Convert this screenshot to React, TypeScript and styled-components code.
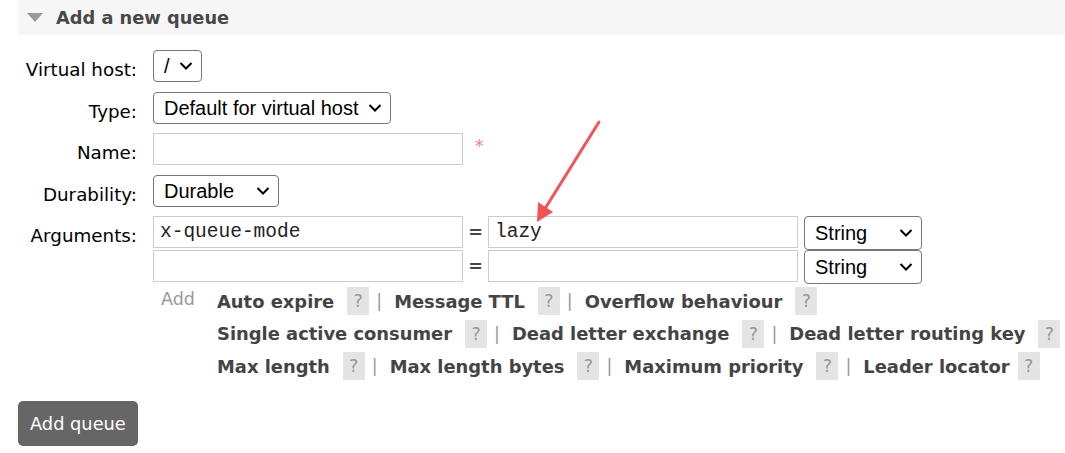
import React from "react";
import styled, { createGlobalStyle } from "styled-components";

const GlobalStyle = createGlobalStyle`
  body {
    margin: 0;
    background: #fff;
    font-family: "DejaVu Sans", Verdana, sans-serif;
    font-size: 17.5px;
    color: #000;
  }
`;

const Page = styled.div`
  position: relative;
  width: 1065px;
  height: 453px;
  padding-left: 18px;
  box-sizing: border-box;
  overflow: hidden;
`;

const SectionHeader = styled.h2`
  margin: 0;
  height: 35px;
  background: #f6f6f6;
  display: flex;
  align-items: center;
  gap: 13px;
  padding-left: 9px;
  font-size: 17.8px;
  font-weight: bold;
  color: #484848;
`;

const Triangle = styled.span`
  width: 0;
  height: 0;
  border-left: 8px solid transparent;
  border-right: 8px solid transparent;
  border-top: 9px solid #9a9a9a;
`;

const Form = styled.div`
  display: grid;
  grid-template-columns: 119px auto;
  column-gap: 16px;
  row-gap: 9.5px;
  margin-top: 15px;
`;

const Label = styled.label`
  text-align: right;
  padding-top: 10px;
  line-height: 20px;
  font-size: 18.3px;
  color: #000;
`;

const Field = styled.div`
  display: flex;
  align-items: center;
  gap: 12px;
`;

const SelectWrap = styled.div<{ $width: number }>`
  position: relative;
  width: ${(p) => p.$width}px;
  height: 32px;
  box-sizing: border-box;
  border: 1px solid #767676;
  border-radius: 4px;
  background: #fff;
  display: flex;
  align-items: center;
`;

const Select = styled.select`
  appearance: none;
  border: none;
  background: transparent;
  width: 100%;
  height: 100%;
  padding: 0 0 0 10px;
  font-family: "Liberation Sans", Arial, sans-serif;
  font-size: 20px;
  color: #000;
  outline: none;
`;

const Chevron = styled.svg`
  position: absolute;
  right: 8px;
  top: 50%;
  transform: translateY(-50%);
  pointer-events: none;
`;

const TextInput = styled.input<{ $mono?: boolean }>`
  width: 310px;
  height: 32px;
  box-sizing: border-box;
  border: 1px solid #ccc;
  padding: 0 6px;
  font-family: ${(p) =>
    p.$mono ? '"Liberation Mono", "Courier New", monospace' : '"DejaVu Sans", sans-serif'};
  font-size: 19.5px;
  color: #222;
  outline: none;
`;

const Required = styled.span`
  color: #f08080;
  font-size: 17px;
  margin-top: -6px;
`;

const ArgRow = styled.div`
  display: flex;
  align-items: flex-start;
  height: 34px;
`;

const Equals = styled.span`
  width: 25px;
  line-height: 32px;
  text-align: center;
  font-weight: bold;
  color: #444;
`;

const TypeSelect = styled(SelectWrap)`
  margin-left: 6px;
  height: 34px;
`;

const Extras = styled.div`
  display: flex;
  margin-top: 3px;
`;

const AddLink = styled.span`
  color: #999;
  width: 64px;
  padding-left: 8px;
  box-sizing: border-box;
  line-height: 24px;
`;

const HelpRows = styled.div`
  display: flex;
  flex-direction: column;
  gap: 4px;
`;

const HelpRow = styled.div`
  display: flex;
  align-items: center;
  height: 28.5px;
`;

const HelpName = styled.span`
  font-weight: bold;
  font-size: 17.9px;
  color: #444;
`;

const HelpMark = styled.span<{ $tight?: boolean }>`
  display: inline-flex;
  align-items: center;
  justify-content: center;
  width: 22px;
  height: 28px;
  margin-left: ${(p) => (p.$tight ? 8 : 13)}px;
  background: #e4e4e4;
  color: #999;
`;

const Pipe = styled.span`
  color: #999;
  margin: 0 12px 0 7px;
`;

const AddButton = styled.button`
  margin-top: 20px;
  height: 45px;
  padding: 0 12px;
  border: none;
  border-radius: 5px;
  background: #666;
  color: #fff;
  font-family: "DejaVu Sans", Verdana, sans-serif;
  font-size: 17.8px;
`;

const Annotation = styled.svg`
  position: absolute;
  left: 0;
  top: 0;
  pointer-events: none;
`;

const ChevronIcon = () => (
  <Chevron width="14" height="9" viewBox="0 0 14 9">
    <path d="M1.5 1.5 L7 7 L12.5 1.5" fill="none" stroke="#000" strokeWidth="2" />
  </Chevron>
);

type DropdownProps = { width: number; options: string[] };

const Dropdown = ({ width, options }: DropdownProps): JSX.Element => (
  <SelectWrap $width={width}>
    <Select defaultValue={options[0]}>
      {options.map((o) => (
        <option key={o}>{o}</option>
      ))}
    </Select>
    <ChevronIcon />
  </SelectWrap>
);

const helpRows: string[][] = [
  ["Auto expire", "Message TTL", "Overflow behaviour"],
  ["Single active consumer", "Dead letter exchange", "Dead letter routing key"],
  ["Max length", "Max length bytes", "Maximum priority", "Leader locator"],
];

const ArgumentRow = ({ name, value }: { name: string; value: string }): JSX.Element => (
  <ArgRow>
    <TextInput $mono defaultValue={name} />
    <Equals>=</Equals>
    <TextInput $mono defaultValue={value} />
    <TypeSelect $width={118}>
      <Select defaultValue="String">
        <option>String</option>
        <option>Number</option>
        <option>Boolean</option>
        <option>List</option>
      </Select>
      <ChevronIcon />
    </TypeSelect>
  </ArgRow>
);

export default function App(): JSX.Element {
  return (
    <>
      <GlobalStyle />
      <Page>
        <SectionHeader>
          <Triangle />
          Add a new queue
        </SectionHeader>
        <Form>
          <Label>Virtual host:</Label>
          <Field>
            <Dropdown width={49} options={["/"]} />
          </Field>

          <Label>Type:</Label>
          <Field>
            <Dropdown width={238} options={["Default for virtual host", "Classic", "Quorum", "Stream"]} />
          </Field>

          <Label>Name:</Label>
          <Field>
            <TextInput />
            <Required>*</Required>
          </Field>

          <Label>Durability:</Label>
          <Field>
            <Dropdown width={126} options={["Durable", "Transient"]} />
          </Field>

          <Label>Arguments:</Label>
          <div>
            <ArgumentRow name="x-queue-mode" value="lazy" />
            <ArgumentRow name="" value="" />
            <Extras>
              <AddLink>Add</AddLink>
              <HelpRows>
                {helpRows.map((row, i) => (
                  <HelpRow key={i}>
                    {row.map((name, j) => (
                      <React.Fragment key={name}>
                        {j > 0 && <Pipe>|</Pipe>}
                        <HelpName>{name}</HelpName>
                        <HelpMark $tight={name === "Leader locator"}>?</HelpMark>
                      </React.Fragment>
                    ))}
                  </HelpRow>
                ))}
              </HelpRows>
            </Extras>
          </div>
        </Form>
        <AddButton>Add queue</AddButton>
        <Annotation width="1065" height="453">
          <line x1="599" y1="122" x2="546" y2="207" stroke="#f05454" strokeWidth="3" strokeLinecap="round" />
          <polygon points="537,222 538,202 553,212" fill="#f05454" />
        </Annotation>
      </Page>
    </>
  );
}
